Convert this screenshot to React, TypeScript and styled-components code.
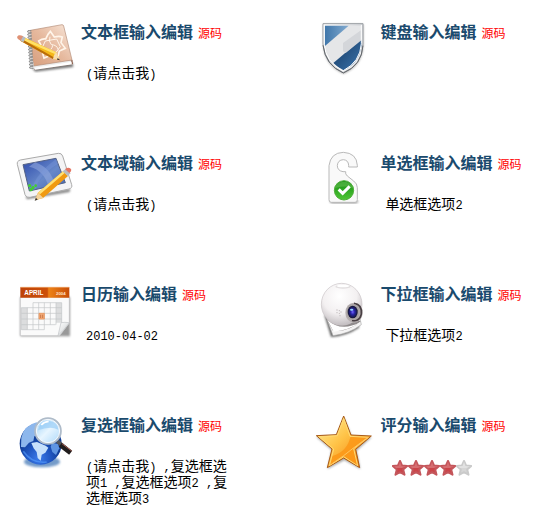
import React, { useState } from "react";
import styled, { createGlobalStyle } from "styled-components";

const GlobalStyle = createGlobalStyle`
  body {
    margin: 0;
    background: #fff;
    color: #000;
    font-family: "Liberation Sans", "Noto Sans CJK SC", sans-serif;
  }
`;

const Features = styled.main`
  display: grid;
  grid-template-columns: 7fr 6fr;
  grid-template-rows: repeat(3, minmax(131px, auto));
  padding-top: 15px;
`;

const Feature = styled.section`
  display: flex;
  align-items: flex-start;
  gap: 1px;
  padding-left: 10px;
`;

const Icon = styled.svg`
  flex: none;
  width: 70px;
  height: 65px;
`;

const Content = styled.div`
  flex: 1;
  min-width: 0;
  padding-top: 6px;
`;

const Heading = styled.header`
  display: flex;
  align-items: baseline;
  gap: 5px;
  height: 24px;
  white-space: nowrap;
`;

const Title = styled.h2`
  margin: 0;
  color: #1a4a6d;
  font-size: 16px;
  line-height: 24px;
  font-weight: 700;
`;

const SourceLink = styled.a`
  color: #f00;
  font-size: 12px;
  line-height: 24px;
  text-decoration: none;
`;

const Value = styled.button`
  display: block;
  max-width: 148px;
  margin: 20px 0 0 5px;
  padding: 0;
  border: 0;
  background: none;
  color: inherit;
  font-family: inherit;
  font-size: 14px;
  line-height: 16px;
  text-align: left;
  cursor: pointer;
`;

const Half = styled.span`
  font-family: "Liberation Mono", monospace;
  font-size: 12px;
  line-height: 12px;
  white-space: pre-wrap;
`;

const Rating = styled.fieldset`
  display: flex;
  margin: 22px 0 0 12px;
  padding: 0;
  border: 0;
`;

const StarLabel = styled.label`
  position: relative;
  width: 16px;
  height: 16px;
  cursor: pointer;
`;

const StarInput = styled.input`
  position: absolute;
  inset: 0;
  width: 16px;
  height: 16px;
  margin: 0;
  opacity: 0;
  cursor: pointer;
`;

const StarShape = styled.svg<{ $on: boolean }>`
  display: block;
  width: 16px;
  height: 16px;
  fill: ${(p) => (p.$on ? "#cb4449" : "#d6d6d6")};
  stroke: ${(p) => (p.$on ? "#c4565b" : "#cacaca")};
`;

const Shade = styled.path<{ $on: boolean }>`
  stroke: none;
  fill: ${(p) => (p.$on ? "#d66e71" : "#e2e2e2")};
`;

const NotebookIcon = () => (
  <Icon viewBox="0 0 210 195" aria-hidden="true">
    <defs>
      <linearGradient id="cover" x1="0" y1="1" x2="1" y2="0">
        <stop offset="0" stopColor="#d69d7c" />
        <stop offset=".5" stopColor="#e6b99e" />
        <stop offset="1" stopColor="#f8e8dc" />
      </linearGradient>
      <filter id="soft"><feGaussianBlur stdDeviation="3" /></filter>
    </defs>
    <path d="M66 160l10 10 114-14-2-12z" fill="#777" filter="url(#soft)" />
    <path d="M68 148l4 16 115-16-4-14z" fill="#eee" stroke="#8a7065" strokeWidth="2" />
    <path d="M61 46L156 29q4 0 5 4l25 102-115 18q-8-40-10-107z" fill="url(#cover)" stroke="#b48d77" strokeWidth="2" />
    <path d="M74 158l112-18 1 8-112 16z" fill="#fff" />
    <path d="M186 135l1 12" stroke="#84503a" strokeWidth="3" />
    <g fill="none" stroke="#fff5ea" strokeWidth="5">
      <path d="M86 78q12-8 21-6 5-14 14-23l12 17q15-4 24 0l-4 17 13 17-18 8-4 17-20-5-22 9-5-18-18-11 13-11z" />
      <path d="M106 78l34-6 11 23-13 17-28 2-12-19zM120 65q-5 15 4 24 16 0 21 15M108 112q18-6 20-21" strokeWidth="3" />
    </g>
    <path d="M63 46L56 75l9 84 8 7-7-52z" fill="#eee" />
    <g fill="none" stroke="#858585" strokeWidth="3">
      {[47, 56, 65, 74, 83, 92, 101, 110, 119, 128, 137, 146, 155].map((y, i) => (
        <path key={y} d={`M${64 + i / 2} ${y}h-10q-5 5 4 5h7`} />
      ))}
    </g>
    <path d="M34 63l105 49 11 24-21-4-97-54z" fill="#f5b719" />
    <path d="M36 65l103 47-3 6-103-45z" fill="#ffe168" />
    <path d="M31 77l98 55 5-4-99-56z" fill="#b96c0c" />
    <path d="M139 111l11 25-21-4q2-14 10-21z" fill="#f7ddad" />
    <path d="M143 129l8 7-10-2z" fill="#403236" />
    <path d="M37 62l10 6-7 14-10-6z" fill="#b6bcc3" />
    <path d="M26 61q6-2 13 3l-7 13q-18-8-6-16z" fill="#df9174" />
  </Icon>
);

const ShieldIcon = () => (
  <Icon viewBox="0 0 210 195" aria-hidden="true">
    <defs>
      <linearGradient id="steel" x1="0" y1="0" x2="1" y2="1">
        <stop stopColor="#fff" /><stop offset=".5" stopColor="#d4d6da" /><stop offset="1" stopColor="#fff" />
      </linearGradient>
      <linearGradient id="blueTop"><stop stopColor="#3f76aa" /><stop offset="1" stopColor="#83abd0" /></linearGradient>
      <linearGradient id="blueLow" x2="1" y2="1"><stop stopColor="#123660" /><stop offset="1" stopColor="#3d76ae" /></linearGradient>
    </defs>
    <path d="M43 28h120v61q-2 63-59 87-57-23-61-87z" fill="#aaa" filter="url(#soft)" />
    <path d="M42 26h120v61q-2 63-59 86-57-23-61-86z" fill="url(#steel)" stroke="#9b9fa4" strokeWidth="3" />
    <path d="M47 32h109v56q-2 54-53 78-52-24-56-78z" fill="#e5e6e8" />
    <path d="M47 32h72L47 94z" fill="url(#blueTop)" />
    <path d="M158 72v19q-8 55-54 75-17-8-31-22z" fill="url(#blueLow)" />
    <path d="M102 84l56-40v31l-48 39-8-5z" fill="#d4d6da" />
    <path d="M46 30v58q3 52 56 80M157 30v56q-3 54-54 81" fill="none" stroke="#fff" strokeWidth="3" />
    <path d="M42 91q8 60 61 83 55-22 59-82" fill="none" stroke="#63676c" strokeWidth="3" />
  </Icon>
);

const TabletIcon = () => (
  <Icon viewBox="0 3 210 195" aria-hidden="true">
    <defs>
      <linearGradient id="screen" x2="1" y2="1"><stop stopColor="#2b48aa" /><stop offset=".55" stopColor="#6788c9" /><stop offset="1" stopColor="#4365b5" /></linearGradient>
    </defs>
    <path d="M48 153l133-22-2 10-129 22z" fill="#888" filter="url(#soft)" />
    <path d="M31 45l114-20q10-1 13 8l27 86q3 10-8 13L60 157q-12 2-15-8L22 58q-2-10 9-13z" fill="#f4f4f5" stroke="#aaa" strokeWidth="3" />
    <path d="M39 59l99-19 28 73-108 25z" fill="url(#screen)" stroke="#536184" strokeWidth="3" />
    <path d="M57 65q47 10 60 65l19-4Q124 67 75 52z" fill="#96ace0" opacity=".55" />
    <path d="M77 132q6-38 67-76l-5-14q-60 42-76 94z" fill="#7b99dc" opacity=".4" />
    <g fill="#43cd32"><circle cx="59" cy="122" r="5" /><circle cx="69" cy="128" r="5" /><circle cx="77" cy="122" r="4" /><circle cx="63" cy="134" r="5" /></g>
    <path d="M160 78l14 15-75 66-24 7 9-23z" fill="#f09a11" />
    <path d="M160 78l5 5-75 65-6-5z" fill="#ffe174" />
    <path d="M84 143l16 16-25 7z" fill="#f4d49d" />
    <path d="M78 158l-4 9 9-3z" fill="#333" />
    <path d="M158 79l10-8 14 14-9 8z" fill="#b7bdc2" />
    <path d="M165 72q14-9 19 2 0 6-6 10z" fill="#e47562" />
  </Icon>
);

const HangerIcon = () => (
  <Icon viewBox="0 3 210 195" aria-hidden="true">
    <defs>
      <linearGradient id="green" y2="1" x2="0"><stop stopColor="#148c12" /><stop offset="1" stopColor="#4fc735" /></linearGradient>
    </defs>
    <path d="M62 166q0 10 8 10h70q8 0 8-10z" fill="#aaa" filter="url(#soft)" />
    <path d="M60 62v102q0 8 7 8h71q7 0 7-8v-36q0-12-11-20l-19-15q-7-6-5-13h-8q-17-3-17-18 1-17 18-18 15 1 16 17v5h26v-5q-2-37-42-39-38 1-43 40z" fill="#f9f9f9" stroke="#b9b9b9" strokeWidth="3" strokeLinejoin="round" />
    <circle cx="105" cy="136" r="29" fill="url(#green)" stroke="#50ae3b" strokeWidth="3" />
    <path d="M78 129q7-20 28-19 21 1 26 20-16-10-54-1z" fill="#71c55c" opacity=".5" />
    <path d="M89 133l12 12 21-21" fill="none" stroke="#fff" strokeWidth="9" />
  </Icon>
);

const CalendarIcon = () => (
  <Icon viewBox="0 6 210 195" aria-hidden="true">
    <defs>
      <linearGradient id="orange"><stop stopColor="#bd4209" /><stop offset=".55" stopColor="#cc5008" /><stop offset=".58" stopColor="#ed8317" /><stop offset="1" stopColor="#c74c08" /></linearGradient>
      <linearGradient id="curl" x2="1" y2="1"><stop stopColor="#fff" /><stop offset="1" stopColor="#c9cdcf" /></linearGradient>
    </defs>
    <path d="M31 66h149v118H31z" fill="#999" filter="url(#soft)" />
    <path d="M31 66h147v78l-29 38H31z" fill="#fafafa" stroke="#bfc0c1" strokeWidth="2" />
    <path d="M31 37h147v31H31z" fill="url(#orange)" />
    <path d="M31 37h147" stroke="#ed9a55" strokeWidth="2" />
    <text x="43" y="59" fill="#fff" fontFamily="Liberation Sans, sans-serif" fontSize="19" fontWeight="700">APRIL</text>
    <text x="138" y="59" fill="#ffe2ca" fontFamily="Liberation Sans, sans-serif" fontSize="13" fontWeight="700">2004</text>
    <path d="M34 98h18v66H34zM138 83h17v60h-17z" fill="#dcddde" />
    <g fill="none" stroke="#c3c5c7" strokeWidth="2">
      <path d="M69 83h86M34 98h121M34 115h121M34 132h121M34 149h103M34 164h69M34 98v66M52 98v66M69 83v81M86 83v81M103 83v81M121 83v66M138 83v66M155 83v60" />
    </g>
    <path d="M87 115h16v17H87z" fill="#f3ae7e" stroke="#e88a46" strokeWidth="2" />
    <path d="M92 119v10M98 119v10" stroke="#ba5c29" strokeWidth="2" />
    <path d="M178 143q-14-2-25 0l-9 39q16-14 34-39z" fill="url(#curl)" stroke="#bfc3c5" strokeWidth="2" />
  </Icon>
);

const WebcamIcon = () => (
  <Icon viewBox="0 6 210 195" aria-hidden="true">
    <defs>
      <radialGradient id="ball" cx="45%" cy="30%" r="70%"><stop stopColor="#fff" /><stop offset=".6" stopColor="#f3f0f1" /><stop offset="1" stopColor="#c3bec1" /></radialGradient>
      <radialGradient id="lens"><stop stopColor="#7462ff" /><stop offset=".4" stopColor="#2825a7" /><stop offset="1" stopColor="#121328" /></radialGradient>
    </defs>
    <path d="M46 120l20 66q44-2 84-28v-21z" fill="#666" filter="url(#soft)" />
    <path d="M54 133l99-2 4 18q-36 27-85 33z" fill="#f4f3f3" stroke="#aaa" strokeWidth="2" />
    <path d="M51 130q39 38 92 4l12 5q-38 34-83 28z" fill="#908b8c" />
    <path d="M55 134q40 38 99 8-34 24-80 28z" fill="#fff" />
    <ellipse cx="98" cy="88" rx="61" ry="63" fill="url(#ball)" stroke="#c9c3c5" strokeWidth="2" />
    <ellipse cx="102" cy="35" rx="23" ry="6" fill="#e2dfe0" /><ellipse cx="102" cy="33" rx="19" ry="4" fill="#fff" />
    <ellipse cx="135" cy="113" rx="26" ry="30" fill="#b6afaf" />
    <path d="M135 85q26 4 22 33-7 24-28 18" fill="none" stroke="#494044" strokeWidth="5" />
    <ellipse cx="132" cy="111" rx="20" ry="24" fill="#aaa4a5" />
    <ellipse cx="131" cy="111" rx="15" ry="19" fill="url(#lens)" />
    <ellipse cx="128" cy="104" rx="5" ry="3" fill="#99d5ff" />
    <g fill="#c1bbbd"><circle cx="84" cy="105" r="2" /><circle cx="91" cy="107" r="2" /><circle cx="84" cy="113" r="2" /><circle cx="91" cy="115" r="2" /><circle cx="96" cy="111" r="2" /><circle cx="93" cy="122" r="2" /></g>
  </Icon>
);

const GlobeIcon = () => (
  <Icon viewBox="0 0 210 195" aria-hidden="true">
    <defs>
      <radialGradient id="ocean" cx="45%" cy="85%"><stop stopColor="#3b7bea" /><stop offset=".6" stopColor="#1f55c0" /><stop offset="1" stopColor="#123f98" /></radialGradient>
      <linearGradient id="glass" x2="1" y2="1"><stop stopColor="#95cef6" /><stop offset=".5" stopColor="#e7f5ff" /><stop offset="1" stopColor="#a9d7fa" /></linearGradient>
    </defs>
    <ellipse cx="96" cy="161" rx="54" ry="17" fill="#759bc9" filter="url(#soft)" />
    <circle cx="92" cy="107" r="63" fill="url(#ocean)" />
    <path d="M34 89q8-37 46-46l10 17-8 9 3 10-12 6-3 14-13 5-12 14-12-1z" fill="#8db7ec" />
    <path d="M64 105l17-3 26 11 8 6-9 15-11 6-3 18-9-8-3-18-9-11z" fill="#c7e1fb" />
    <path d="M126 104l18 4 4 13-10 20-11-9-5-16z" fill="#5f95e2" />
    <path d="M40 130q26 38 70 32" fill="none" stroke="#579fff" strokeWidth="5" opacity=".6" />
    <path d="M142 100l37 31" stroke="#55585e" strokeWidth="12" />
    <path d="M151 110l31 24" stroke="#211d1d" strokeWidth="15" />
    <path d="M156 107l29 22" stroke="#a85f52" strokeWidth="3" />
    <circle cx="114" cy="69" r="38" fill="url(#glass)" stroke="#aebbc9" strokeWidth="7" />
    <circle cx="114" cy="69" r="35" fill="none" stroke="#f7fbff" strokeWidth="3" />
    <path d="M84 67q5-29 33-28 27 2 28 26-24-12-61 2z" fill="#8cc6f5" opacity=".6" />
    <path d="M94 51q8-10 22-11" fill="none" stroke="#fff" strokeWidth="5" />
  </Icon>
);

const FavoriteIcon = () => (
  <Icon viewBox="0 0 210 195" aria-hidden="true">
    <defs>
      <linearGradient id="gold" x2="1" y2="1"><stop stopColor="#fff3a1" /><stop offset=".45" stopColor="#ffc347" /><stop offset="1" stopColor="#ef7200" /></linearGradient>
    </defs>
    <path d="M105 29l23 55 60 4-45 40 11 55-48-26-50 26 11-57-45-39 61-4z" fill="#aaa" filter="url(#soft)" />
    <path d="M104 24l22 57 61 3-47 40 12 55-48-29-49 29 14-56-47-40 60-3z" fill="url(#gold)" stroke="#a85a17" strokeWidth="3" strokeLinejoin="round" />
    <path d="M125 83l54 5-44 34 12 51-43-28-41 26 7-27q46-14 55-61z" fill="#fb9818" opacity=".85" />
    <path d="M104 31l19 54 55 3-44 34 12 51-42-27-43 27 13-50-43-36 54-4z" fill="none" stroke="#ffda75" strokeWidth="3" />
    <path d="M132 121l-28 22-36 25M132 121l45-33" fill="none" stroke="#ffc65e" strokeWidth="3" />
  </Icon>
);

const STAR = "M8 1l2 4.5 5.2.5-4 3.5 1.3 5.2L8 12.2l-4.5 2.5 1.3-5.2L.8 6 6 5.5z";

function StarRating() {
  const [score, setScore] = useState(4);
  return (
    <Rating aria-label="评分">
      {[1, 2, 3, 4, 5].map((n) => (
        <StarLabel key={n}>
          <StarInput type="radio" name="score" aria-label={String(n)} checked={score === n} onChange={() => setScore(n)} />
          <StarShape viewBox="0 0 16 16" $on={n <= score} aria-hidden="true">
            <path d={STAR} strokeWidth="2" strokeLinejoin="round" />
            <Shade $on={n <= score} d="M8 2l1.5 4 4.5.5-4 1.5-6 0-2-1.7L6.5 6z" />
          </StarShape>
        </StarLabel>
      ))}
    </Rating>
  );
}

const halfWidth = (text: string) =>
  text.split(/([\x20-\x7e]+)/).map((part, i) => (i % 2 ? <Half key={i}>{part}</Half> : part));

const features = [
  { title: "文本框输入编辑", icon: NotebookIcon, value: "(请点击我)" },
  { title: "键盘输入编辑", icon: ShieldIcon },
  { title: "文本域输入编辑", icon: TabletIcon, value: "(请点击我)" },
  { title: "单选框输入编辑", icon: HangerIcon, value: "单选框选项2" },
  { title: "日历输入编辑", icon: CalendarIcon, value: "2010-04-02" },
  { title: "下拉框输入编辑", icon: WebcamIcon, value: "下拉框选项2" },
  { title: "复选框输入编辑", icon: GlobeIcon, value: "(请点击我) ,复选框选项1 ,复选框选项2 ,复选框选项3" },
  { title: "评分输入编辑", icon: FavoriteIcon, rating: true },
];

export default function App() {
  return (
    <>
      <GlobalStyle />
      <Features>
        {features.map(({ title, icon: Picture, value, rating }) => (
          <Feature key={title}>
            <Picture />
            <Content>
              <Heading>
                <Title>{title}</Title>
                <SourceLink href="#source">源码</SourceLink>
              </Heading>
              {value && <Value type="button">{halfWidth(value)}</Value>}
              {rating && <StarRating />}
            </Content>
          </Feature>
        ))}
      </Features>
    </>
  );
}
